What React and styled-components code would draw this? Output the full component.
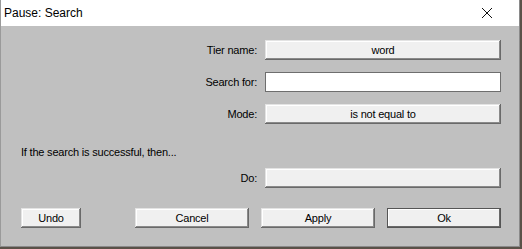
import React from 'react'
import styled, { createGlobalStyle } from 'styled-components'

const GlobalStyle = createGlobalStyle`
html, body {
  margin: 0;
  padding: 0;
  background: #5a5148;
  width: 522px;
  height: 249px;
  overflow: hidden;
}
`

function App() {
  return (
    <>
      <GlobalStyle />
      <Window>
        <TitleBar>
          <Title>Pause: Search</Title>
          <CloseBox>
            <svg width="12" height="12" viewBox="0 0 12 12">
              <path d="M1 1 L11 11 M11 1 L1 11" stroke="#111" strokeWidth="1" fill="none" />
            </svg>
          </CloseBox>
        </TitleBar>
        <Body>
          <Form>
            <Label>Tier name:</Label>
            <Button>word</Button>
            <Label>Search for:</Label>
            <TextBox />
            <Label>Mode:</Label>
            <Button>is not equal to</Button>
          </Form>
          <Message>If the search is successful, then...</Message>
          <Form>
            <Label>Do:</Label>
            <Button />
          </Form>
          <ButtonRow>
            <Button $w="60px">Undo</Button>
            <Spacer />
            <Actions>
              <Button $w="114px">Cancel</Button>
              <Button $w="114px">Apply</Button>
              <Button $w="114px" $default>Ok</Button>
            </Actions>
          </ButtonRow>
        </Body>
      </Window>
    </>
  )
}

const Window = styled.div`
width: 520px;
height: 247px;
box-sizing: border-box;
background: #c0c0c0;
border-left: 1px solid #9a9a9a;
border-right: 1px solid #8a8a8a;
border-bottom: 1px solid #8a8a8a;
display: flex;
flex-direction: column;
`

const TitleBar = styled.div`
height: 26px;
background: #ffffff;
display: flex;
align-items: center;
justify-content: space-between;
padding-left: 3px;
`

const Title = styled.span`
font-family: "Liberation Sans", Arial, sans-serif;
font-size: 12px;
color: #000;
`

const CloseBox = styled.div`
width: 46px;
height: 26px;
display: flex;
align-items: center;
justify-content: center;
margin-right: 9px;
`

const Body = styled.div`
padding: 14px 18px 0 20px;
font-family: "Liberation Sans", Arial, sans-serif;
font-size: 11px;
letter-spacing: -0.2px;
color: #000;
display: flex;
flex-direction: column;
`

const Form = styled.div`
display: grid;
grid-template-columns: 236px 236px;
column-gap: 8px;
row-gap: 12px;
justify-content: end;
align-items: center;
`

const Label = styled.div`
text-align: right;
`

const Button = styled.div`
box-sizing: border-box;
height: 20px;
width: ${p => p.$w || 'auto'};
background: #f0f0f0;
display: flex;
align-items: center;
justify-content: center;
box-shadow: ${p => p.$default
  ? 'inset 0 0 0 1px #555, inset -2px -2px #696969, inset 2px 2px #fff'
  : 'inset -1px -1px #696969, inset 1px 1px #e3e3e3, inset -2px -2px #8a8a8a, inset 2px 2px #fff'};
`

const TextBox = styled.div`
box-sizing: border-box;
height: 20px;
background: #fff;
border: 1px solid #6e6e6e;
`

const Message = styled.div`
margin-top: 21px;
margin-bottom: 9px;
line-height: 14px;
`

const ButtonRow = styled.div`
margin-top: 20px;
display: flex;
align-items: center;
`

const Spacer = styled.div`
flex: 1;
`

const Actions = styled.div`
display: flex;
gap: 12px;
`

export default App
